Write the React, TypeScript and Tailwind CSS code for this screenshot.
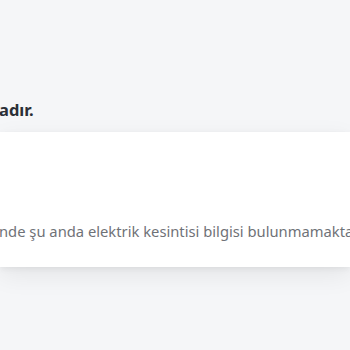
export default function App() {
  return (
    <div
      className="h-[350px] w-[350px] overflow-hidden bg-[#f5f6f8]"
      style={{ fontFamily: '"Noto Sans", "Open Sans", sans-serif' }}
    >
      <div className="flex h-[132px] items-end pb-[11px]">
        <p className="-ml-[1px] whitespace-nowrap text-[16.5px] font-bold leading-[22px] text-[#2b2f36]">
          adır.
        </p>
      </div>
      <div className="flex h-[135px] items-end bg-white pb-[25px] shadow-[0_2px_6px_rgba(0,0,0,0.06),0_8px_24px_rgba(0,0,0,0.07)]">
        <p className="-ml-[1px] whitespace-nowrap text-[14.75px] leading-[22px] text-[#6f7277]">
          nde şu anda elektrik kesintisi bilgisi bulunmamaktadır.
        </p>
      </div>
    </div>
  );
}
